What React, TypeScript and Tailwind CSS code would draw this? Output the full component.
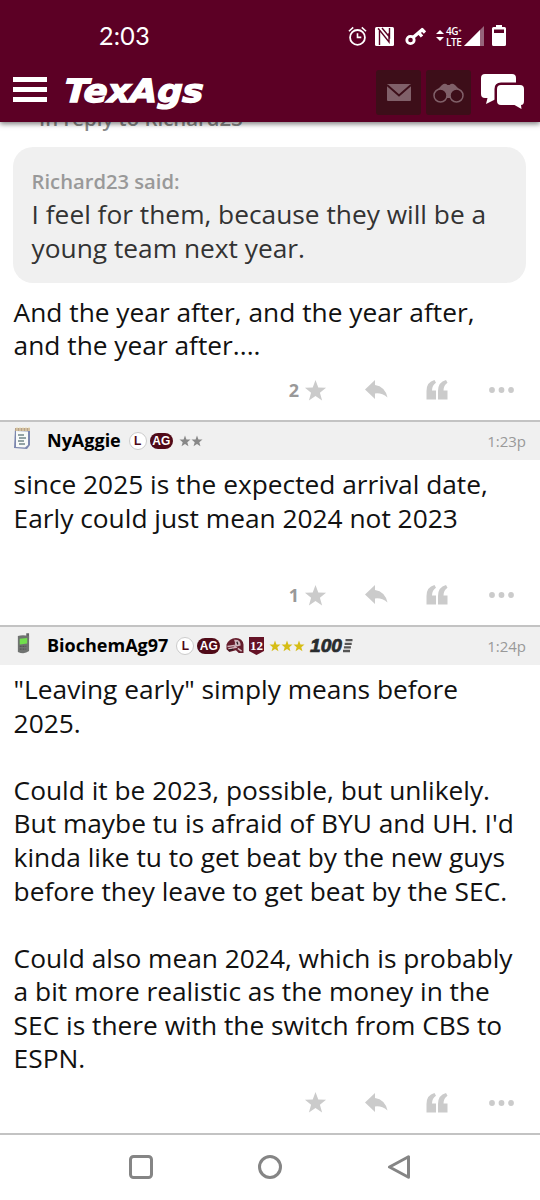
import type { ReactNode } from "react";

const STAR = "M12 1l2.9 7.9 8.1.3-6.4 5.1 2.3 8.2L12 17.8l-6.9 4.7 2.3-8.2L1 9.2l8.1-.3z";

const StatusBar = () => (
  <div className="flex h-[72px] items-center">
    <span className="-mt-[2px] ml-[99px] w-[249px] font-['Lato'] text-[25px] leading-[30px] tracking-[0.3px]">2:03</span>
    <svg className="h-[20px] w-[19px] shrink-0" viewBox="0 0 20 21" fill="none" stroke="white" strokeWidth="1.9">
      <circle cx="10" cy="12" r="7.8" />
      <path d="M10 7.5V12h4M1 5.5l4.500-4M19 5.5l-4.500-4" strokeWidth="1.7" />
    </svg>
    <svg className="ml-[8px] h-[19px] w-[19px] shrink-0" viewBox="0 0 19 19">
      <rect width="19" height="19" rx="1.5" fill="white" />
      <path d="M4.500 18V3l9.500 12V6M7 1l7.500 9V1M4.500 3L3 1.500" fill="none" stroke="#5c0025" strokeWidth="1.4" />
    </svg>
    <svg className="ml-[11px] h-5 w-[21px] shrink-0" viewBox="0 0 21 20">
      <circle cx="5.5" cy="14" r="3.7" fill="none" stroke="white" strokeWidth="2.8" />
      <path d="M8 11.500L18 3M13.500 6.500l3.500 4M16.500 3l3.500 3.500" stroke="white" strokeWidth="3.3" />
    </svg>
    <svg className="-mt-[2px] ml-[10px] h-[11px] w-2 shrink-0" viewBox="0 0 8 11" fill="white">
      <path d="M4 0l4 4H0zM4 11L0 7h8z" />
    </svg>
    <div className="ml-[2px] mt-[2px] w-[18px] shrink-0 whitespace-nowrap font-['Open_Sans'] text-[10px] font-semibold leading-[11.5px] tracking-[-0.4px]">
      <div>4G⁺</div>
      <div>LTE</div>
    </div>
    <svg className="h-5 w-[20px] shrink-0" viewBox="0 0 20 20">
      <path d="M20 0v20H0z" fill="#96647b" />
      <path d="M16 4v16H0z" fill="white" />
    </svg>
    <svg className="-mt-[1px] ml-[8px] h-[21px] w-[14px] shrink-0" viewBox="0 0 14 21">
      <path d="M4 0h6v2h2.500q1.500 0 1.500 1.500v16q0 1.500-1.500 1.500h-11Q0 21 0 19.500v-16Q0 2 1.500 2H4z" fill="white" />
      <path d="M2 4.500h10V8H2z" fill="#5c0025" />
    </svg>
  </div>
);

const SiteBar = () => (
  <div className="flex h-[50px] items-start">
    <div className="ml-[13px] mt-[5px] flex w-[34px] flex-col gap-[5px]">
      <i className="h-[5px] bg-white" />
      <i className="h-[5px] bg-white" />
      <i className="h-[5px] bg-white" />
    </div>
    <svg className="ml-[16px] h-10 w-[150px]" viewBox="0 0 150 40">
      <text
        x="0"
        y="29.5"
        textLength="139"
        lengthAdjust="spacingAndGlyphs"
        transform="translate(2.5 0) skewX(-3)"
        fill="white"
        stroke="white"
        strokeWidth="1.4"
        className="font-['DejaVu_Sans'] text-[32px] font-bold italic"
      >
        TexAgs
      </text>
    </svg>
    <div className="ml-auto mr-[16px] flex items-start">
      <div className="-mt-[2px] flex h-[45px] w-[45px] items-center justify-center rounded-[3px] bg-[#3d0e19]">
        <svg className="h-[17px] w-6" viewBox="0 0 24 17">
          <rect width="24" height="17" rx="1" fill="#806069" />
          <path d="M0 1l12 10.500L24 1" fill="none" stroke="#3d0e19" strokeWidth="2" />
        </svg>
      </div>
      <div className="-mt-[2px] ml-[5px] flex h-[45px] w-[45px] items-center justify-center rounded-[3px] bg-[#3d0e19]">
        <svg className="h-[20px] w-[31px]" viewBox="0 0 31 20">
          <path d="M2 9L9 2q3-2.500 5.500 0h2q2.500-2.500 5.500 0l7 7-11 6h-5z" fill="#806069" />
          <circle cx="7.500" cy="12.500" r="6.500" fill="#3d0e19" stroke="#806069" strokeWidth="1.500" />
          <circle cx="23.500" cy="12.500" r="6.500" fill="#3d0e19" stroke="#806069" strokeWidth="1.500" />
        </svg>
      </div>
      <svg className="ml-[10px] mt-[1px] h-[36px] w-[43px]" viewBox="0 0 43 36" fill="white">
        <path d="M4 1h27q4 0 4 4v21H15l-10 5 1.500-6H4q-4 0-4-4V5q0-4 4-4z" />
        <path d="M20 12h18.500q4 0 4 4v12.500q0 4-3 4l1 2.500-6-2.500H20q-4 0-4-4V16q0-4 4-4z" stroke="#5c0025" strokeWidth="5" />
        <path d="M20 12h19q4 0 4 4v12q0 4-3 4l.5 4-7-4H20q-4 0-4-4V16q0-4 4-4z" />
      </svg>
    </div>
  </div>
);

const Actions = ({ count }: { count?: string }) => (
  <div className="flex h-6 items-center text-[#cbcbcb]">
    <span className="w-[299px] text-right text-[18px] font-bold leading-6 text-[#999]">{count}</span>
    <svg className="ml-[5px] h-[23px] w-[23px]" viewBox="0 0 24 24" fill="currentColor">
      <path d={STAR} />
    </svg>
    <svg className="ml-[38px] h-[20px] w-[23px]" viewBox="0 0 23 20" fill="currentColor">
      <path d="M0 9.500L10 0v5q10 1.500 12.500 12.500-6-5-12.500-4V19z" />
    </svg>
    <svg className="ml-[38px] h-[20px] w-[22px]" viewBox="0 0 22 20" fill="currentColor">
      <path d="M.5 19.500V11q0-9 8-11l1.500 2.800Q6 5.500 6 10.500h4v9z" />
      <path d="M12 19.500V11q0-9 8-11l1.500 2.800q-4 2.700-4 7.700h4v9z" />
    </svg>
    <svg className="ml-[41px] h-[6px] w-[26px]" viewBox="0 0 26 6" fill="currentColor">
      <circle cx="3" cy="3" r="2.900" />
      <circle cx="12.500" cy="3" r="2.900" />
      <circle cx="22" cy="3" r="2.900" />
    </svg>
  </div>
);

const Tags = () => (
  <>
    <span className="flex h-[18px] w-[18px] items-center justify-center rounded-full border border-[#ccc] bg-white font-['Liberation_Sans'] text-[12px] font-bold leading-none text-[#500a18]">L</span>
    <span className="ml-[3px] flex h-[16px] w-[23px] items-center justify-center rounded-full bg-[#500a18] font-['Liberation_Sans'] text-[12px] font-bold leading-none text-white">AG</span>
  </>
);

const Stars = ({ count, className }: { count: number; className: string }) => (
  <span className={`flex ${className}`}>
    {Array.from({ length: count }, (_, i) => (
      <svg key={i} className="h-3 w-3" viewBox="0 0 24 24" fill="currentColor">
        <path d={STAR} />
      </svg>
    ))}
  </span>
);

const PostHeader = ({ avatar, name, time, children }: { avatar: ReactNode; name: string; time: string; children: ReactNode }) => (
  <div className="flex h-[40px] items-center border-t-2 border-[#c3c3c3] bg-[#f0f0f0]">
    <div className="ml-[13px] w-[34px]">{avatar}</div>
    <span className="-mt-[3px] text-[18px] font-bold leading-6 text-black">{name}</span>
    <div className="-mt-[1px] ml-[8px] flex items-center">{children}</div>
    <span className="-mt-[1px] ml-auto mr-[14px] text-[15px] leading-6 text-[#999]">{time}</span>
  </div>
);

const Notepad = () => (
  <svg className="-mt-[6px] h-[23px] w-[18px]" viewBox="0 0 18 23">
    <path d="M2 2l15 1v15l-3 4-13-1z" fill="#7c87af" />
    <path d="M3 4l12 .5V18l-3 2.500L3 20z" fill="#f8faf9" />
    <path d="M2 1h15v3H2z" fill="#b7a18a" />
    <path d="M4 0v4M7 0v4M10 0v4M13 0v4M16 0v4" stroke="#eee0b4" />
    <path d="M5 8h6M6 11h7M5 14h6M6 17h6" stroke="#718789" strokeWidth="1.5" />
  </svg>
);

const Phone = () => (
  <svg className="-mt-[4px] ml-[3px] h-[22px] w-[14px]" viewBox="0 0 15 23">
    <path d="M11 0h3v6h-3z" fill="#656565" />
    <path d="M2 3q5-2 12 0v16q-5 4-12 1z" fill="#707371" />
    <path d="M4 6l8-1v6l-8 1z" fill="#71df4d" />
    <path d="M4 14h7M4 17h7" stroke="#555" strokeWidth="1.5" strokeDasharray="2 1" />
  </svg>
);

const HelmetBadge = () => (
  <svg className="ml-[5px] h-[17px] w-[20px]" viewBox="0 0 20 18">
    <path d="M1 8Q4 1 11 1q7 0 8 7v9h-5l-3-3-7 2-3-3z" fill="#651c2b" />
    <path d="M9 3q7-1 7 6l-4 1q-3 0-2-4z" fill="#cfb5bc" />
    <path d="M2 10l7-1 2 2-8 1.500M13 12l4 3" fill="none" stroke="#cfb5bc" strokeWidth="1.6" />
    <path d="M3 14l5-1M12 5l1 3" stroke="#24191d" strokeWidth="1.3" />
  </svg>
);

export default function App() {
  return (
    <div className="h-[1200px] w-[540px] overflow-hidden bg-white font-['Open_Sans',sans-serif] text-[#111]">
      <header className="relative z-10 h-[122px] bg-[#5c0025] text-white shadow-[0_2px_5px_rgba(0,0,0,0.5)]">
        <StatusBar />
        <SiteBar />
      </header>

      <section className="h-[298px]">
        <div className="flex h-[25px] items-start pl-[39px]">
          <span className="-mt-[17px] text-[20.4px] font-semibold leading-[27px] text-[#888]">In reply to Richard23</span>
        </div>
        <blockquote className="ml-[13px] h-[136px] w-[513px] rounded-[20px] bg-[#f0f0f0] pl-[18.6px] pt-[21px] text-[#333]">
          <div className="text-[20.2px] font-semibold leading-[27px] text-[#999]">Richard23 said:</div>
          <p className="mt-[3px] text-[26.3px] leading-[33.55px]">
            I feel for them, because they will be a<br />
            young team next year.
          </p>
        </blockquote>
        <p className="ml-[13.6px] mt-[12.5px] h-[82.5px] text-[26.3px] leading-[33.55px]">
          And the year after, and the year after,<br />
          and the year after....
        </p>
        <Actions count="2" />
      </section>

      <section className="h-[205px]">
        <PostHeader avatar={<Notepad />} name="NyAggie" time="1:23p">
          <Tags />
          <Stars count={2} className="ml-[6px] text-[#888]" />
        </PostHeader>
        <p className="ml-[13.6px] mt-[8px] h-[115px] text-[26.3px] leading-[33.55px]">
          since 2025 is the expected arrival date,<br />
          Early could just mean 2024 not 2023
        </p>
        <Actions count="1" />
      </section>

      <section className="h-[508px]">
        <PostHeader avatar={<Phone />} name="BiochemAg97" time="1:24p">
          <Tags />
          <HelmetBadge />
          <svg className="ml-[4px] h-[18px] w-[15px]" viewBox="0 0 15 18">
            <path d="M0 0h15v14l-7.500 4L0 14z" fill="#651326" />
            <text x="7.500" y="12.500" textAnchor="middle" fill="white" className="font-['Liberation_Serif'] text-[13px] font-bold">12</text>
          </svg>
          <Stars count={3} className="ml-[5px] text-[#d6bd16]" />
          <svg className="ml-[4px] h-[20px] w-[46px]" viewBox="0 0 46 20">
            <text x="1" y="16" textLength="32" lengthAdjust="spacingAndGlyphs" fill="#292c2e" stroke="#292c2e" strokeWidth="0.7" className="font-['Liberation_Sans'] text-[18.5px] font-bold italic">100</text>
            <path d="M36.500 4.200h7M35.700 7.800h7M34.900 11.400h7M34 15h7" stroke="#555" strokeWidth="2.3" />
          </svg>
        </PostHeader>
        <p className="ml-[13.6px] mt-[8.3px] h-[417.7px] whitespace-pre-line text-[26.3px] leading-[33.55px]">
          {`"Leaving early" simply means before
            2025.

            Could it be 2023, possible, but unlikely.
            But maybe tu is afraid of BYU and UH. I'd
            kinda like tu to get beat by the new guys
            before they leave to get beat by the SEC.

            Could also mean 2024, which is probably
            a bit more realistic as the money in the
            SEC is there with the switch from CBS to
            ESPN.`}
        </p>
        <Actions />
      </section>

      <nav className="flex h-[65px] items-center border-t-2 border-[#c3c3c3] pl-[129px] text-[#858585]">
        <svg className="h-6 w-6" viewBox="0 0 24 24" fill="none" stroke="currentColor" strokeWidth="3">
          <rect x="1.5" y="1.5" width="21" height="21" rx="3" />
        </svg>
        <svg className="ml-[105px] h-6 w-6" viewBox="0 0 24 24" fill="none" stroke="currentColor" strokeWidth="3">
          <circle cx="12" cy="12" r="10.5" />
        </svg>
        <svg className="ml-[105px] h-6 w-6" viewBox="0 0 24 24" fill="none" stroke="currentColor" strokeWidth="3" strokeLinejoin="round">
          <path d="M2.500 12L21.500 1.800v20.400z" />
        </svg>
      </nav>
    </div>
  );
}
